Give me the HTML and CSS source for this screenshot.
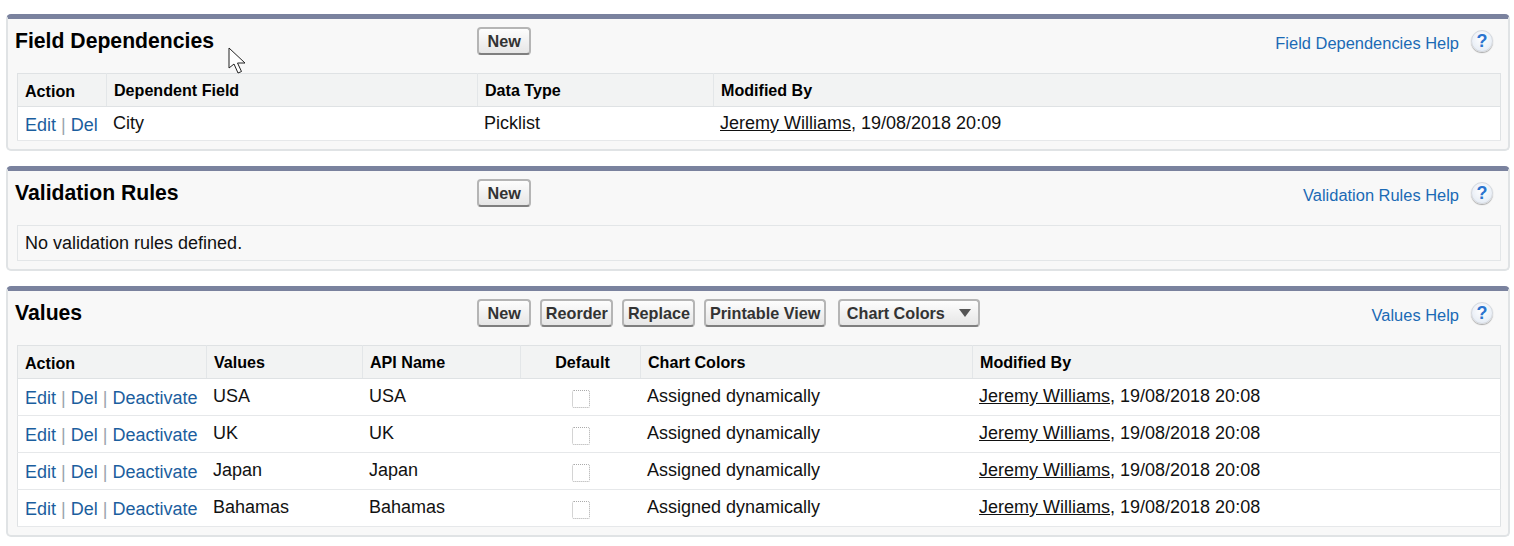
FILE: index.html

```html
<!DOCTYPE html>
<html lang="en">
<head>
<meta charset="utf-8"/>
<title>Field Dependencies</title>
<link rel="stylesheet" href="styles.css">
</head>
<body>

<div class="panel">
  <div class="panel-head">
    <h2 class="panel-title">Field Dependencies</h2>
    <div class="buttons"><button class="btn">New</button></div>
    <div class="help"><a href="#">Field Dependencies Help</a><span class="help-icon">?</span></div>
  </div>
  <table class="list">
    <colgroup><col class="w89"><col class="w371"><col class="w236"><col></colgroup>
    <tr><th class="th-action">Action</th><th>Dependent Field</th><th>Data Type</th><th>Modified By</th></tr>
    <tr>
      <td class="actions"><a href="#">Edit</a> <i>|</i> <a href="#">Del</a></td>
      <td>City</td>
      <td>Picklist</td>
      <td><a class="user" href="#">Jeremy Williams</a>, 19/08/2018 20:09</td>
    </tr>
  </table>
</div>

<div class="panel">
  <div class="panel-head">
    <h2 class="panel-title">Validation Rules</h2>
    <div class="buttons"><button class="btn">New</button></div>
    <div class="help"><a href="#">Validation Rules Help</a><span class="help-icon">?</span></div>
  </div>
  <div class="empty">No validation rules defined.</div>
</div>

<div class="panel">
  <div class="panel-head">
    <h2 class="panel-title">Values</h2>
    <div class="buttons">
      <button class="btn">New</button>
      <button class="btn tight">Reorder</button>
      <button class="btn tight">Replace</button>
      <button class="btn tight">Printable View</button>
      <button class="btn menu">Chart Colors<span class="arrow"></span></button>
    </div>
    <div class="help"><a href="#">Values Help</a><span class="help-icon">?</span></div>
  </div>
  <table class="list values">
    <colgroup><col class="w189"><col class="w156"><col class="w158"><col class="w120"><col class="w332"><col></colgroup>
    <tr><th class="th-action">Action</th><th>Values</th><th>API Name</th><th class="center">Default</th><th>Chart Colors</th><th>Modified By</th></tr>
    <tr>
      <td class="actions"><a href="#">Edit</a> <i>|</i> <a href="#">Del</a> <i>|</i> <a href="#">Deactivate</a></td>
      <td>USA</td><td>USA</td><td class="center"><span class="check"></span></td><td>Assigned dynamically</td>
      <td><a class="user" href="#">Jeremy Williams</a>, 19/08/2018 20:08</td>
    </tr>
    <tr>
      <td class="actions"><a href="#">Edit</a> <i>|</i> <a href="#">Del</a> <i>|</i> <a href="#">Deactivate</a></td>
      <td>UK</td><td>UK</td><td class="center"><span class="check"></span></td><td>Assigned dynamically</td>
      <td><a class="user" href="#">Jeremy Williams</a>, 19/08/2018 20:08</td>
    </tr>
    <tr>
      <td class="actions"><a href="#">Edit</a> <i>|</i> <a href="#">Del</a> <i>|</i> <a href="#">Deactivate</a></td>
      <td>Japan</td><td>Japan</td><td class="center"><span class="check"></span></td><td>Assigned dynamically</td>
      <td><a class="user" href="#">Jeremy Williams</a>, 19/08/2018 20:08</td>
    </tr>
    <tr>
      <td class="actions"><a href="#">Edit</a> <i>|</i> <a href="#">Del</a> <i>|</i> <a href="#">Deactivate</a></td>
      <td>Bahamas</td><td>Bahamas</td><td class="center"><span class="check"></span></td><td>Assigned dynamically</td>
      <td><a class="user" href="#">Jeremy Williams</a>, 19/08/2018 20:08</td>
    </tr>
  </table>
</div>

<svg class="cursor" width="20" height="28" viewBox="0 0 20 28">
  <path d="M1 1 L1 21 L6 17 L10 26 L13.5 24.5 L9.5 16 L17 16 Z" fill="#fff" stroke="#222" stroke-width="1"/>
</svg>

</body>
</html>
```

FILE: styles.css

```css
body {
  margin: 0;
  padding: 14px 4px 0 6px;
  font-family: "Liberation Sans", Arial, sans-serif;
  font-size: 18px;
  color: #111;
  background: #fff;
}
.panel {
  background: #f8f8f8;
  border: 2px solid #e0e3e5;
  border-top: 5px solid #7a829e;
  border-radius: 5px;
  padding: 0 8px 8px 8px;
  margin-bottom: 15px;
}
.panel-head {
  display: flex;
  align-items: flex-start;
  height: 54px;
}
.panel-title {
  width: 462px;
  margin: 10px 0 0 -1px;
  font-size: 21.2px;
  line-height: 24px;
  font-weight: bold;
  color: #000;
}
.buttons {
  flex: 1;
  display: flex;
  gap: 9px;
  padding-top: 8px;
}
.btn {
  height: 28px;
  padding: 0 8.5px;
  font-family: inherit;
  font-size: 16.2px;
  font-weight: bold;
  color: #333;
  background: linear-gradient(#fdfdfd, #e6e6e6);
  border: 2px solid #b5b5b5;
  border-bottom-color: #7f7f7f;
  border-radius: 4px;
}
.btn.tight {
  padding: 0 3.5px;
}
.btn.menu {
  display: flex;
  align-items: center;
  margin-left: 3px;
  padding: 0 7px 0 7px;
}
.arrow {
  width: 0;
  height: 0;
  margin-left: 14px;
  border-left: 6px solid transparent;
  border-right: 6px solid transparent;
  border-top: 8px solid #555;
}
.help {
  display: flex;
  align-items: flex-start;
  gap: 12px;
  padding-top: 14px;
}
.help a {
  color: #1b6ab5;
  text-decoration: none;
  line-height: 20px;
  font-size: 16.45px;
}
.help-icon {
  width: 22px;
  height: 22px;
  margin-top: -3px;
  margin-right: 7px;
  border-radius: 50%;
  border: 1px solid #d4d8de;
  box-sizing: border-box;
  background: radial-gradient(circle at 50% 40%, #fff, #dfe7f2);
  box-shadow: 0 1px 1px #aaa;
  color: #2a74cf;
  font-weight: bold;
  font-size: 18px;
  line-height: 20px;
  text-align: center;
}
.list {
  width: 1484px;
  margin-left: 1px;
  border-collapse: collapse;
  table-layout: fixed;
  background: #fff;
  border: 1px solid #dfe2e4;
}
.w89 { width: 89px; }
.w371 { width: 371px; }
.w236 { width: 236px; }
.w189 { width: 189px; }
.w156 { width: 156px; }
.w158 { width: 158px; }
.w120 { width: 120px; }
.w332 { width: 332px; }
.list th {
  height: 33px;
  padding: 1px 7px 0;
  box-sizing: border-box;
  text-align: left;
  font-size: 16.1px;
  color: #000;
  background: #f2f3f3;
  border-left: 1px solid #e3e6e8;
  border-bottom: 1px solid #dfe2e4;
}
.list th.th-action {
  padding: 3px 7px 0;
  border-left: 0;
}
.list .center {
  text-align: center;
}
.list th.center {
  padding-left: 11px;
}
.list td {
  height: 34px;
  padding: 0 6.5px 1px;
  box-sizing: border-box;
  border-bottom: 1px solid #e6e8ea;
}
.list.values td {
  height: 37px;
}
.list td.actions {
  padding: 3px 7px 0;
  white-space: nowrap;
}
.actions a {
  color: #1b5e9e;
  text-decoration: none;
}
.actions i {
  font-style: normal;
  color: #9aa5ae;
}
.user {
  color: #111;
}
.check {
  display: inline-block;
  width: 18px;
  height: 18px;
  box-sizing: border-box;
  border: 1px dotted #aaa;
  border-radius: 2px;
  vertical-align: -6px;
}
.empty {
  height: 36px;
  margin-left: 1px;
  width: 1484px;
  padding: 0 7px 0;
  box-sizing: border-box;
  line-height: 34px;
  border: 1px solid #e3e6e8;
  background: #f8f8f8;
}
.cursor {
  position: absolute;
  left: 228px;
  top: 47px;
}
```
